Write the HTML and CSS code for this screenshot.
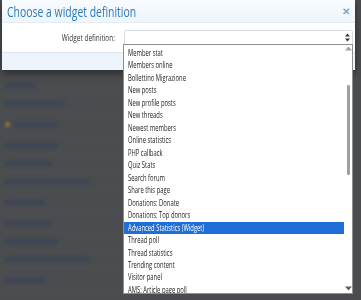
FILE: index.html
```
<!DOCTYPE html>
<html lang="en">
<head>
  <meta charset="UTF-8">
  <meta name="viewport" content="width=device-width, initial-scale=1.0">
  <title>Choose a widget definition</title>
  <link rel="stylesheet" href="styles.css">
</head>
<body>
  <div class="backdrop">
    <div class="bg__row"><span class="bg__bar" style="width: 32px"></span></div>
    <div class="bg__row"><span class="bg__bar" style="width: 60px"></span></div>
    <div class="bg__row bg__row--tall"><span class="bg__dot"></span><span class="bg__bar" style="width: 44px"></span></div>
    <div class="bg__row"><span class="bg__bar" style="width: 53px"></span></div>
    <div class="bg__row"><span class="bg__bar" style="width: 47px"></span></div>
    <div class="bg__row"><span class="bg__bar" style="width: 85px"></span></div>
    <div class="bg__row bg__row--tall"><span class="bg__bar" style="width: 40px"></span></div>
    <div class="bg__row"><span class="bg__bar" style="width: 47px"></span></div>
    <div class="bg__row"><span class="bg__bar" style="width: 53px"></span></div>
    <div class="bg__row"><span class="bg__bar" style="width: 85px"></span></div>
    <div class="bg__row bg__row--tall"><span class="bg__bar" style="width: 40px"></span></div>
  </div>

  <div class="overlay">
    <div class="modal">
      <div class="modal__header">
        <h1 class="modal__title"><span class="narrow">Choose a widget definition</span></h1>
        <span class="modal__close">&#x2715;</span>
      </div>
      <div class="modal__body">
        <label class="modal__label"><span class="narrow narrow--right">Widget definition:</span></label>
        <div class="select">
          <svg class="select__arrows" width="5" height="9" viewBox="0 0 5 9"><path d="M0 3.5 L2.5 0.5 L5 3.5 Z M0 5.5 L2.5 8.5 L5 5.5 Z" fill="#333"/></svg>
        </div>
      </div>
      <div class="modal__footer"></div>
    </div>

    <div class="dropdown">
      <ul class="dropdown__list">
        <li><span class="narrow">Member stat</span></li>
        <li><span class="narrow">Members online</span></li>
        <li><span class="narrow">Bollettino Migrazione</span></li>
        <li><span class="narrow">New posts</span></li>
        <li><span class="narrow">New profile posts</span></li>
        <li><span class="narrow">New threads</span></li>
        <li><span class="narrow">Newest members</span></li>
        <li><span class="narrow">Online statistics</span></li>
        <li><span class="narrow">PHP callback</span></li>
        <li><span class="narrow">Quiz Stats</span></li>
        <li><span class="narrow">Search forum</span></li>
        <li><span class="narrow">Share this page</span></li>
        <li><span class="narrow">Donations: Donate</span></li>
        <li><span class="narrow">Donations: Top donors</span></li>
        <li class="is-selected"><span class="narrow">Advanced Statistics (Widget)</span></li>
        <li><span class="narrow">Thread poll</span></li>
        <li><span class="narrow">Thread statistics</span></li>
        <li><span class="narrow">Trending content</span></li>
        <li><span class="narrow">Visitor panel</span></li>
        <li><span class="narrow">AMS: Article page poll</span></li>
      </ul>
      <div class="scrollbar">
        <svg width="7" height="5" viewBox="0 0 7 5"><path d="M0 4.5 L3.5 0.5 L7 4.5 Z" fill="#a3a3a3"/></svg>
        <div class="scrollbar__track"><div class="scrollbar__thumb"></div></div>
        <svg width="7" height="5" viewBox="0 0 7 5"><path d="M0 0.5 L3.5 4.5 L7 0.5 Z" fill="#606060"/></svg>
      </div>
    </div>
  </div>
</body>
</html>
```

FILE: styles.css
```
* {
  margin: 0;
  padding: 0;
  box-sizing: border-box;
}

body {
  background: #4a4c4f;
  font-family: "Open Sans", "Noto Sans", sans-serif;
  width: 361px;
  height: 300px;
  overflow: hidden;
  position: relative;
}

/* the shot is squeezed sideways, so text is narrowed to match */
.narrow {
  display: inline-block;
  transform: scaleX(0.68);
  transform-origin: left center;
}

.narrow--right {
  transform: scaleX(0.76);
  transform-origin: right center;
}

/* blurred page behind the dialog */
.backdrop {
  padding-top: 77px;
  filter: blur(1.5px);
}

.bg__row {
  height: 18px;
  display: flex;
  align-items: center;
  padding-left: 5px;
  gap: 4px;
  border-bottom: 1px solid #505357;
}

.bg__row--tall {
  height: 24px;
}

.bg__bar {
  display: block;
  height: 5px;
  background: #3d4656;
  border-radius: 2px;
}

.bg__dot {
  display: block;
  width: 5px;
  height: 5px;
  border-radius: 50%;
  background: #8a7a3c;
}

.overlay {
  position: absolute;
  top: 0;
  left: 0;
}

.modal {
  position: absolute;
  top: 0;
  left: 2px;
  width: 353px;
  background: #fff;
  box-shadow: 0 3px 8px rgba(0, 0, 0, 0.45);
}

.modal__header {
  height: 23px;
  display: flex;
  align-items: center;
  justify-content: space-between;
  padding: 0 5px 0 5px;
  background: linear-gradient(#f8fbfe, #eef5fc);
  border-bottom: 1px solid #e3ebf3;
  white-space: nowrap;
}

.modal__title {
  font-size: 14.5px;
  font-weight: normal;
  color: #2b7ab8;
}

.modal__title .narrow {
  transform: scaleX(0.72);
}

.modal__close {
  color: #7ea7c7;
  font-size: 10px;
  font-weight: bold;
}

.modal__body {
  height: 29px;
  display: flex;
  align-items: center;
  padding: 0 2px 0 0;
}

.modal__label {
  width: 115px;
  text-align: right;
  font-size: 8.5px;
  color: #333;
  padding-right: 2px;
  white-space: nowrap;
}

.select {
  margin-left: 7px;
  flex: 1;
  height: 16px;
  border: 1px solid #d4dde6;
  border-radius: 2px;
  display: flex;
  align-items: center;
  justify-content: flex-end;
  padding-right: 2px;
}

.modal__footer {
  height: 18px;
  background: #eef4fb;
  border-top: 1px solid #dde6ef;
}

.dropdown {
  position: absolute;
  top: 44px;
  left: 123px;
  width: 230px;
  height: 250px;
  background: #fff;
  border: 1px solid #8f8f8f;
  overflow: hidden;
  display: flex;
}

.dropdown__list {
  list-style: none;
  flex: 1;
  padding-top: 2px;
}

.dropdown__list li {
  height: 12.47px;
  line-height: 12.47px;
  font-size: 8.6px;
  color: #222;
  padding-left: 4px;
  white-space: nowrap;
}

.dropdown__list li.is-selected {
  background: #1f6fd6;
  color: #fff;
}

.scrollbar {
  width: 8px;
  display: flex;
  flex-direction: column;
  align-items: center;
  padding: 1px 0 2px;
}

.scrollbar__track {
  flex: 1;
  width: 100%;
  padding-top: 34px;
  display: flex;
  justify-content: center;
}

.scrollbar__thumb {
  width: 3px;
  height: 90px;
  background: #a0a0a0;
  border-radius: 1px;
}
```
